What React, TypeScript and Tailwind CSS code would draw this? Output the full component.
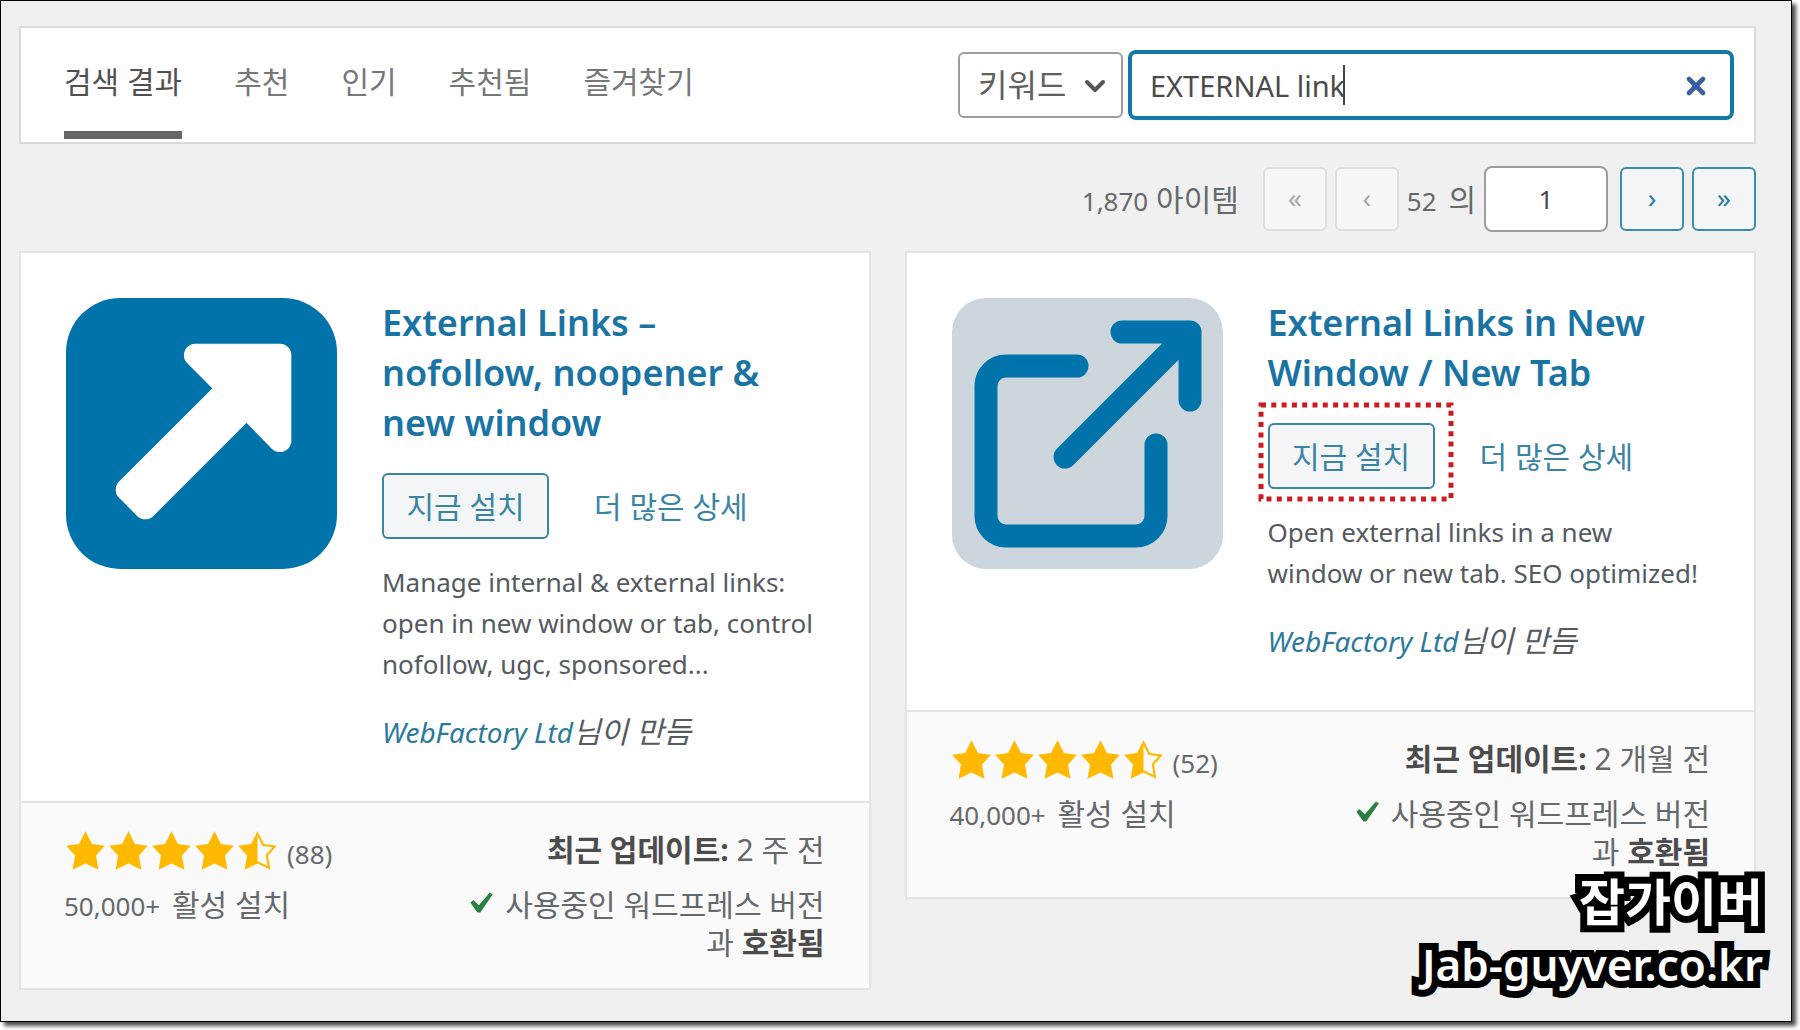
import { ChevronDown, X } from "lucide-react";
import type { ReactNode } from "react";

type Plugin = {
  name: string;
  icon: ReactNode;
  description: string;
  author: string;
  votes: number;
  installs: string;
  updated: string;
  highlight?: boolean;
};

const tabs = ["검색 결과", "추천", "인기", "추천됨", "즐겨찾기"];

const STAR_FULL = "M10 1l3 6 6 .75-4.12 4.62L16 19l-6-3-6 3 1.13-6.63L1 7.75 7 7z";
const STAR_HALF =
  "M10 1L7 7l-6 .75 4.13 4.62L4 19l6-3 6 3-1.12-6.63L19 7.75 13 7zm0 2.24l2.34 4.69 4.65.58-3.18 3.56.87 5.15L10 14.88z";

const ArrowIcon = () => (
  <svg viewBox="0 0 270 270" className="size-[271px] shrink-0" aria-hidden="true">
    <rect width="270" height="270" rx="54" fill="#0073aa" />
    <path
      d="M129 57H213V142L180 108L79 209L61 191L162 90Z"
      fill="#fff"
      stroke="#fff"
      strokeWidth="23"
      strokeLinejoin="round"
    />
  </svg>
);

const NewTabIcon = () => (
  <svg viewBox="0 0 271 271" className="size-[271px] shrink-0" aria-hidden="true">
    <rect width="271" height="271" rx="34" fill="#cdd6dc" />
    <g fill="none" stroke="#0073aa" strokeWidth="23" strokeLinecap="round" strokeLinejoin="round">
      <path d="M125 68H54a20 20 0 0 0-20 20V218a20 20 0 0 0 20 20H184a20 20 0 0 0 20-20V147" />
      <path d="M170 34H238V102M238 34L113 159" />
    </g>
  </svg>
);

const plugins: Plugin[] = [
  {
    name: "External Links – nofollow, noopener & new window",
    icon: <ArrowIcon />,
    description: "Manage internal & external links: open in new window or tab, control nofollow, ugc, sponsored...",
    author: "WebFactory Ltd",
    votes: 88,
    installs: "50,000+",
    updated: "2 주 전",
  },
  {
    name: "External Links in New Window / New Tab",
    icon: <NewTabIcon />,
    description: "Open external links in a new window or new tab. SEO optimized!",
    author: "WebFactory Ltd",
    votes: 52,
    installs: "40,000+",
    updated: "2 개월 전",
    highlight: true,
  },
];

const Stars = () => (
  <div className="flex" role="img" aria-label="4.5 / 5">
    {[STAR_FULL, STAR_FULL, STAR_FULL, STAR_FULL, STAR_HALF].map((d, i) => (
      <svg key={i} viewBox="0 0 20 20" className="size-[43px] fill-[#ffb900]">
        <path d={d} />
      </svg>
    ))}
  </div>
);

const PageButton = ({ label, children, disabled }: { label: string; children: string; disabled?: boolean }) => (
  <button
    type="button"
    aria-label={label}
    disabled={disabled}
    className="h-16 w-16 rounded-md border-2 border-[#3c8dad] bg-[#f3f5f6] pb-1 text-[28px] leading-none text-[#2b7f9f] disabled:border-[#dedfe0] disabled:bg-[#f6f7f7] disabled:text-[#a7aaad]"
  >
    {children}
  </button>
);

const PluginCard = ({ plugin }: { plugin: Plugin }) => (
  <article className="border-2 border-[#e2e3e4] bg-white">
    <div className="flex gap-[45px] pt-[45px] pr-11 pb-12 pl-[45px]">
      {plugin.icon}
      <div className="min-w-0 flex-1">
        <h3 className="pr-5 text-[36px] leading-[50px] font-semibold text-[#1a74a3]">
          <a href="#">{plugin.name}</a>
        </h3>
        <div className="mt-[25px] flex items-center gap-[45px]">
          <div className="relative">
            <button
              type="button"
              className="h-[66px] w-[167px] rounded-md border-2 border-[#3c86a3] bg-[#f3f5f6] text-[30px] text-[#3a84a3]"
            >
              지금 설치
            </button>
            {plugin.highlight && (
              <svg
                viewBox="0 0 196 100"
                className="pointer-events-none absolute -top-[21px] -left-[10px] h-[100px] w-[196px] max-w-none"
                aria-hidden="true"
              >
                <rect x="3" y="3" width="190" height="94" fill="none" stroke="#cc1a1f" strokeWidth="5" strokeDasharray="5 5.3" />
              </svg>
            )}
          </div>
          <a href="#" className="text-[30px] text-[#3a84a3]">
            더 많은 상세
          </a>
        </div>
        <p className="mt-[23px] text-[26px] leading-[41px] text-[#555a5f]">{plugin.description}</p>
        <p className="mt-[26px] text-[28px] leading-[41px] whitespace-nowrap text-[#555a5f] italic">
          <a href="#" className="text-[#2b7a9b]">
            {plugin.author}
          </a>
          <span className="text-[30px]">님이 만듬</span>
        </p>
      </div>
    </div>
    <div className="border-t-2 border-[#e2e3e4] bg-[#fafafa] pt-6 pr-11 pb-[26px] pl-[43px] text-[30px] leading-[38px] text-[#66696c]">
      <div className="flex items-center justify-between">
        <div className="flex items-center">
          <Stars />
          <span className="ml-2 pt-2 text-[26px]">({plugin.votes})</span>
        </div>
        <div>
          <strong className="font-bold text-[#4c4c4c]">최근 업데이트:</strong> {plugin.updated}
        </div>
      </div>
      <div className="mt-[13px] flex items-start justify-between">
        <div>
          <span className="mr-1 text-[26px]">{plugin.installs}</span> 활성 설치
        </div>
        <div className="flex items-start gap-1 text-right">
          <svg viewBox="0 0 20 20" className="-mt-1 size-[43px] fill-[#2c7f43]" aria-hidden="true">
            <path d="M14.83 4.89l1.34.94-5.81 8.38H9.02L5.78 9.67l1.34-1.25 2.57 2.4z" />
          </svg>
          <p>
            사용중인 워드프레스 버전
            <br />과 <strong className="font-bold text-[#4c4c4c]">호환됨</strong>
          </p>
        </div>
      </div>
    </div>
  </article>
);

export default function App() {
  return (
    <div className="flex min-h-screen bg-white pr-2 pb-2 font-['Noto_Sans','Noto_Sans_CJK_KR',sans-serif]">
      <main className="relative flex-1 border border-black bg-[#f0f0f0] pt-[25px] pr-[35px] pl-[18px] shadow-[4px_4px_4px_rgba(0,0,0,0.7)]">
        <header className="flex justify-between border-2 border-[#d8dadc] bg-white pr-5 pl-[43px]">
          <nav className="flex gap-[52px] pb-[3px]">
            {tabs.map((tab, i) => (
              <a
                key={tab}
                href="#"
                aria-current={i === 0 ? "page" : undefined}
                className="border-b-8 border-transparent pt-[34px] pb-[29px] text-[30px] leading-[40px] text-[#777] aria-[current]:border-[#666] aria-[current]:text-[#505050]"
              >
                {tab}
              </a>
            ))}
          </nav>
          <form className="flex items-center gap-[5px]" onSubmit={(e) => e.preventDefault()}>
            <div className="relative">
              <select
                aria-label="검색 기준"
                className="h-[66px] w-[165px] appearance-none rounded-md border-2 border-[#9a9da1] bg-white pl-[18px] text-[32px] text-[#606060]"
              >
                <option>키워드</option>
              </select>
              <ChevronDown className="pointer-events-none absolute top-[18px] right-[12px] size-8 text-[#555]" strokeWidth={3} />
            </div>
            <div className="relative">
              <input
                type="text"
                aria-label="플러그인 검색"
                defaultValue="EXTERNAL link"
                className="h-[70px] w-[606px] rounded-lg border-4 border-[#1579a8] bg-white pr-16 pl-[18px] text-[29px] text-[#4a4a4a] outline-none"
              />
              <span className="absolute top-[15px] left-[215px] h-10 w-0.5 bg-[#444]" />
              <button type="button" aria-label="지우기" className="absolute top-[22px] right-[24px] text-[#3a5fa3]">
                <X className="size-7" strokeWidth={4} />
              </button>
            </div>
          </form>
        </header>

        <div className="mt-[22px] flex items-center justify-end text-[30px] text-[#66696c]">
          <span className="mr-6">
            <span className="text-[26px]">1,870</span> 아이템
          </span>
          <div className="flex gap-2">
            <PageButton label="첫 페이지" disabled>
              «
            </PageButton>
            <PageButton label="이전 페이지" disabled>
              ‹
            </PageButton>
          </div>
          <span className="mx-2">
            <span className="mr-1 text-[26px]">52</span> 의
          </span>
          <input
            type="text"
            aria-label="현재 페이지"
            defaultValue="1"
            className="mr-3 h-[66px] w-[124px] rounded-lg border-2 border-[#9a9da1] bg-white text-center text-[26px] text-[#4a4a4a]"
          />
          <div className="flex gap-2">
            <PageButton label="다음 페이지">›</PageButton>
            <PageButton label="마지막 페이지">»</PageButton>
          </div>
        </div>

        <div className="mt-[19px] grid grid-cols-2 items-start gap-[34px]">
          {plugins.map((plugin) => (
            <PluginCard key={plugin.name} plugin={plugin} />
          ))}
        </div>

        <div className="absolute right-[28px] bottom-[31px] flex flex-col gap-[10px] text-right leading-[52px] text-white [-webkit-text-stroke:14px_#000] [paint-order:stroke_fill] [stroke-linejoin:round]">
          <p className="text-[50px] font-bold">잡가이버</p>
          <p className="text-[44px] font-semibold">Jab-guyver.co.kr</p>
        </div>
      </main>
    </div>
  );
}
